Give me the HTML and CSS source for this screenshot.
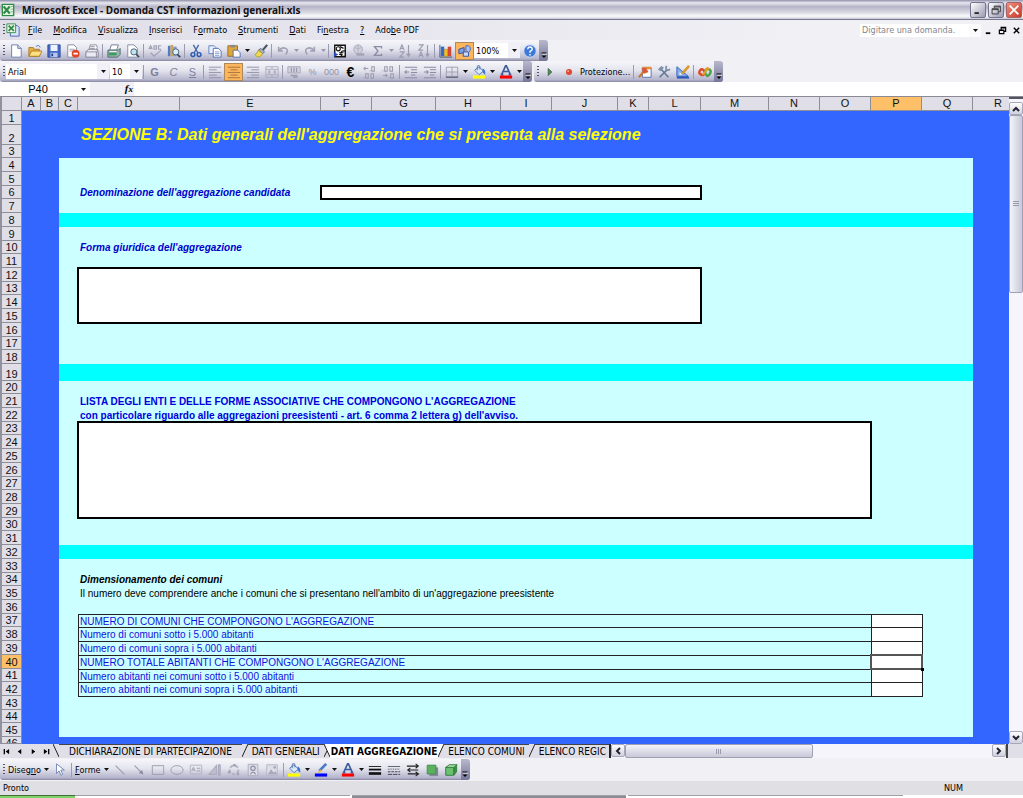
FILE: index.html
```html
<!DOCTYPE html>
<html lang="it">
<head>
<meta charset="utf-8">
<title>Microsoft Excel - Domanda CST informazioni generali.xls</title>
<link rel="stylesheet" href="styles.css">
</head>
<body>
<svg class="defs" aria-hidden="true">
  <symbol id="caret" viewBox="0 0 5 3"><path d="M0 0h5L2.500 3z" fill="#111"/></symbol>
  <symbol id="caret-off" viewBox="0 0 5 3"><path d="M0 0h5L2.500 3z" fill="#99a"/></symbol>
  <symbol id="more" viewBox="0 0 8 18"><path d="M2 12h5" stroke="#fff"/><path d="M1.500 11h5" stroke="#000"/><path d="M1.500 13.500h5L4 16z" fill="#000"/></symbol>
  <symbol id="bucket" viewBox="0 0 16 16"><path d="M3 6l5-4 5 5-5 4z" fill="#dce8f8" stroke="#4870a8"/><path d="M6 6V2q0-1.500 1.500-1.500T9 2v3" fill="none" stroke="#4870a8"/><path d="M12 4q4 1 3 7-3-2-3-4z" fill="#3a78d0"/><path d="M1 12h14v3.500H1z" fill="#ff0"/></symbol>
  <symbol id="font-color" viewBox="0 0 16 16"><path d="M3 11L7.500 1h1L13 11M5 7.500h6M2 11h3M11 11h3" fill="none" stroke="#3a5a9c" stroke-width="1.800"/><path d="M1 12h14v3.500H1z" fill="#f00"/></symbol>
</svg>

<header class="titlebar">
  <svg class="icon" viewBox="0 0 16 16"><path d="M1.500 1.500h13v13h-13z" fill="#e4f4e4" stroke="#2f8a45" stroke-width="1.500"/><path d="M11 4h3M11 7h3M11 10h3" stroke="#7ab888"/><path d="M3 4l7 8M10 4l-7 8" stroke="#2f8a45" stroke-width="2.400"/></svg>
  <h1 class="title">Microsoft Excel - Domanda CST informazioni generali.xls</h1>
  <button class="winbtn" aria-label="Riduci"><svg viewBox="0 0 16 16"><path d="M4 11.500h5" stroke="#222" stroke-width="2"/></svg></button>
  <button class="winbtn" aria-label="Ripristina"><svg viewBox="0 0 16 16"><path d="M6 6V3.500h7V10h-2M3.500 6.500h7v6h-7zM3.500 7.500h7M6 4.500h7" fill="none" stroke="#333"/></svg></button>
  <button class="winbtn winbtn-close" aria-label="Chiudi"><svg viewBox="0 0 16 16"><path d="M3 3l10 10M13 3L3 13" stroke="#fff" stroke-width="2"/></svg></button>
</header>

<nav class="menubar">
  <span class="grip"></span>
  <svg class="icon" viewBox="0 0 16 16"><path d="M5 3h8l2 2v10H5z" fill="#dce6fa" stroke="#3a5aa8"/><path d="M1 1h10v10H1z" fill="#e8f6e8" stroke="#2f8a45"/><path d="M3 3l6 6M9 3L3 9" stroke="#2f8a45" stroke-width="2"/></svg>
  <div class="menus">
    <button><u>F</u>ile</button><button><u>M</u>odifica</button><button><u>V</u>isualizza</button><button><u>I</u>nserisci</button><button>F<u>o</u>rmato</button><button><u>S</u>trumenti</button><button><u>D</u>ati</button><button>Fi<u>n</u>estra</button><button><u>?</u></button><button>Ado<u>b</u>e PDF</button>
  </div>
  <input class="ask" type="text" placeholder="Digitare una domanda." aria-label="Domanda">
  <button class="drop ask-drop" aria-label="Elenco domande"><svg><use href="#caret"/></svg></button>
  <button class="docbtn" aria-label="Riduci documento"><svg viewBox="0 0 10 10"><path d="M2 8h5" stroke="#000" stroke-width="2"/></svg></button>
  <button class="docbtn" aria-label="Ripristina documento"><svg viewBox="0 0 10 10"><path d="M3.500 4V1.500h5V6H7M1.500 4.500h5v4h-5zM1.500 5h5M3.500 2h5" fill="none" stroke="#000" stroke-width="1.300"/></svg></button>
  <button class="docbtn" aria-label="Chiudi documento"><svg viewBox="0 0 10 10"><path d="M2 2l6 6M8 2L2 8" stroke="#000" stroke-width="1.600"/></svg></button>
</nav>

<div class="barrow">
  <div class="toolbar" role="toolbar" aria-label="Standard">
    <span class="grip"></span>
    <button class="tool" aria-label="Nuovo"><svg viewBox="0 0 16 16"><path d="M3 1h7l4 4v10H3z" fill="#fff" stroke="#6478a8"/><path d="M10 1v4h4" fill="#cdd8ee" stroke="#6478a8"/></svg></button>
    <button class="tool" aria-label="Apri"><svg viewBox="0 0 16 16"><path d="M1 14V4h5l1 2h6v8z" fill="#e8b040" stroke="#a87820"/><path d="M1 14l3-6h12l-3 6z" fill="#ffe080" stroke="#a87820"/><path d="M9 3q3-3 5 1" fill="none" stroke="#456ab0"/></svg></button>
    <button class="tool" aria-label="Salva"><svg viewBox="0 0 16 16"><path d="M1 1h14v14H1z" fill="#4668c8" stroke="#284898"/><path d="M4 1h8v7H4z" fill="#eef4ff"/><path d="M4 10h8v5H4z" fill="#b8c8e8"/><path d="M5 11h2v3H5z" fill="#223a88"/></svg></button>
    <button class="tool" aria-label="Autorizzazioni"><svg viewBox="0 0 16 16"><path d="M2 1h7l3 3v11H2z" fill="#fff" stroke="#789"/><path d="M4 6h6M4 8h5" stroke="#99a"/><circle cx="11" cy="11" r="4.500" fill="#e04828"/><path d="M8.500 11h5" stroke="#fff" stroke-width="2"/></svg></button>
    <button class="tool" aria-label="Posta"><svg viewBox="0 0 16 16"><path d="M6 1h7l1 3-2 5H4z" fill="#fff" stroke="#889"/><path d="M1 9l3-3h10l1 3v6H1z" fill="#e8eaf4" stroke="#778"/><path d="M1 9h12v6M13 9l2-2M6 3h5M6 5h5" fill="none" stroke="#889"/></svg></button>
    <span class="sep"></span>
    <button class="tool" aria-label="Stampa"><svg viewBox="0 0 16 16"><path d="M5 1h8l-2 6H3z" fill="#fff" stroke="#678"/><path d="M1 7h12l2-2v7l-3 3H1z" fill="#9cb4b0" stroke="#466"/><path d="M2 10h9v3H2z" fill="#3c9c5c"/><path d="M3 8.500h8" stroke="#fff"/></svg></button>
    <button class="tool" aria-label="Anteprima"><svg viewBox="0 0 16 16"><path d="M2 1h7l4 4v10H2z" fill="#fff" stroke="#789"/><circle cx="9" cy="9" r="3.500" fill="#bfe4f4" stroke="#456"/><path d="M11.500 11.500L15 15" stroke="#456" stroke-width="2"/></svg></button>
    <span class="sep"></span>
    <button class="tool" aria-label="Controllo ortografia"><svg viewBox="0 0 16 16"><path d="M1 6l2-4 2 4M2 5h2M7 2v4h2.500V2zM15 2h-3v4h3M3 10l4 4 8-7" fill="none" stroke="#a0a0b4" stroke-width="1.400"/></svg></button>
    <button class="tool" aria-label="Ricerche"><svg viewBox="0 0 16 16"><path d="M1 2h3v12H1z" fill="#5878c0"/><path d="M4 1h3v13H4z" fill="#c8a860"/><path d="M7 3h4v11H7z" fill="#7c9cd4"/><circle cx="10" cy="9" r="3.500" fill="#d8f0fc" stroke="#456"/><path d="M12 12l3 3" stroke="#345" stroke-width="2"/></svg></button>
    <span class="sep"></span>
    <button class="tool" aria-label="Taglia"><svg viewBox="0 0 16 16"><path d="M5 1l5 9M11 1L6 10" stroke="#456ca8" stroke-width="1.600"/><circle cx="4.500" cy="12" r="2.200" fill="none" stroke="#2858b0" stroke-width="1.600"/><circle cx="11.500" cy="12" r="2.200" fill="none" stroke="#2858b0" stroke-width="1.600"/></svg></button>
    <button class="tool" aria-label="Copia"><svg viewBox="0 0 16 16"><path d="M1 2h6l2 2v7H1z" fill="#e8f0ff" stroke="#5878b8"/><path d="M6 5h6l3 3v7H6z" fill="#fff" stroke="#4868b0"/><path d="M8 9h5M8 11h5M8 13h5" stroke="#7c98d0"/></svg></button>
    <button class="tool" aria-label="Incolla"><svg viewBox="0 0 16 16"><path d="M1 2h11v12H1z" fill="#e0a838" stroke="#906820"/><path d="M4 1h5v3H4z" fill="#889"/><path d="M7 7h5l3 3v5H7z" fill="#fff" stroke="#4868b0"/></svg></button>
    <button class="drop" aria-label="Opzioni incolla"><svg><use href="#caret"/></svg></button>
    <button class="tool" aria-label="Copia formato"><svg viewBox="0 0 16 16"><path d="M15 1l-5 6" stroke="#456" stroke-width="2.500"/><path d="M8 5l4 4-2 2-5-4z" fill="#a8b4c8" stroke="#567"/><path d="M5 7l5 4q-2 4-6 4l-3-3q3-1 4-5z" fill="#f0d850" stroke="#a89830"/></svg></button>
    <span class="sep"></span>
    <button class="tool" aria-label="Annulla"><svg viewBox="0 0 16 16"><path d="M3 3v5h5M3 8q4-5 8-3t0 7" fill="none" stroke="#a0a0b4" stroke-width="1.800"/></svg></button>
    <button class="drop" aria-label="Elenco annulla"><svg><use href="#caret-off"/></svg></button>
    <button class="tool" aria-label="Ripeti"><svg viewBox="0 0 16 16"><path d="M13 3v5H8M13 8q-4-5-8-3t0 7" fill="none" stroke="#a0a0b4" stroke-width="1.800"/></svg></button>
    <button class="drop" aria-label="Elenco ripeti"><svg><use href="#caret-off"/></svg></button>
    <span class="sep"></span>
    <button class="tool" aria-label="Euro"><svg viewBox="0 0 16 16"><path d="M2 1.500h12v13H2z" fill="#fff" stroke="#111" stroke-width="1.600"/><circle cx="6" cy="5.500" r="2.300" fill="none" stroke="#111" stroke-width="1.300"/><path d="M8 3l4 2M14 8q-5-1-5 3t5 3M7 10h5M7 12h4" fill="none" stroke="#111" stroke-width="1.300"/><path d="M1 9l5 3-5 3z" fill="#2848c0"/></svg></button>
    <button class="tool" aria-label="Collegamento"><svg viewBox="0 0 16 16"><circle cx="7" cy="6" r="5" fill="#d0d0dc" stroke="#a8a8b8"/><path d="M3 4q4 3 8 0M7 1v10" fill="none" stroke="#b0b0c0"/><path d="M5 12h4M9 12h5" stroke="#a4a4b6" stroke-width="3"/></svg></button>
    <button class="tool" aria-label="Somma automatica"><svg viewBox="0 0 16 16"><path d="M12 5V3H4l4 5-4 5h8v-2" fill="none" stroke="#8c8ca4" stroke-width="1.600"/></svg></button>
    <button class="drop" aria-label="Altre funzioni"><svg><use href="#caret-off"/></svg></button>
    <button class="tool" aria-label="Ordinamento crescente"><svg viewBox="0 0 16 16"><path d="M2 7l2.500-6L7 7M3 5h3M2 9h5l-5 6h5M12 1v13M10 11l2 3 2-3" fill="none" stroke="#9c9cb0" stroke-width="1.300"/></svg></button>
    <button class="tool" aria-label="Ordinamento decrescente"><svg viewBox="0 0 16 16"><path d="M2 1h5L2 7h5M2 15l2.500-6L7 15M3 13h3M12 1v13M10 11l2 3 2-3" fill="none" stroke="#9c9cb0" stroke-width="1.300"/></svg></button>
    <span class="sep"></span>
    <button class="tool" aria-label="Grafico"><svg viewBox="0 0 16 16"><path d="M1 1v14h14" fill="none" stroke="#456"/><path d="M2 3h4v11H2z" fill="#3868c8"/><path d="M6 6h4v8H6z" fill="#f0c020" stroke="#a07010" stroke-width=".5"/><path d="M10 3h4v11h-4z" fill="#d04838"/></svg></button>
    <button class="tool tool-on" aria-label="Disegno"><svg viewBox="0 0 16 16"><path d="M1 6l6-2v6l-6 1z" fill="#7ca0e8" stroke="#2848a0"/><path d="M6 9h6v5H6z" fill="#c8dcfa" stroke="#2848a0"/><path d="M9 2q6-1 5 5l-2 3-3-3z" fill="#a8c4f4" stroke="#3860b8"/></svg></button>
    <input class="combo zoom" type="text" value="100%" aria-label="Zoom">
    <button class="drop drop-box" aria-label="Elenco zoom"><svg><use href="#caret"/></svg></button>
    <button class="tool" aria-label="Guida"><svg viewBox="0 0 16 16"><circle cx="8" cy="8" r="7" fill="#3c78d8" stroke="#c0d4f4"/><path d="M5.500 6q0-2.500 2.500-2.500T10.500 6q0 1.500-2.500 2.500V10M8 11.500v1.500" fill="none" stroke="#fff" stroke-width="1.600"/></svg></button>
    <button class="more" aria-label="Opzioni barra"><svg><use href="#more"/></svg></button>
  </div>
</div>

<div class="barrow">
  <div class="toolbar" role="toolbar" aria-label="Formattazione">
    <span class="grip"></span>
    <input class="combo fontname" type="text" value="Arial" aria-label="Tipo di carattere">
    <button class="drop drop-box" aria-label="Elenco caratteri"><svg><use href="#caret"/></svg></button>
    <input class="combo fontsize" type="text" value="10" aria-label="Dimensione">
    <button class="drop drop-box" aria-label="Elenco dimensioni"><svg><use href="#caret"/></svg></button>
    <span class="sep"></span>
    <button class="tool letter"><b>G</b></button>
    <button class="tool letter"><i>C</i></button>
    <button class="tool letter"><u>S</u></button>
    <span class="sep"></span>
    <button class="tool" aria-label="Allinea a sinistra"><svg viewBox="0 0 16 16"><path d="M1 2.500h14M1 5.500h9M1 8.500h14M1 11.500h9M1 14.500h14" stroke="#8c8ca4"/></svg></button>
    <button class="tool tool-on" aria-label="Centra"><svg viewBox="0 0 16 16"><path d="M1 2.500h14M4 5.500h8M1 8.500h14M4 11.500h8M1 14.500h14" stroke="#98703c"/></svg></button>
    <button class="tool" aria-label="Allinea a destra"><svg viewBox="0 0 16 16"><path d="M1 2.500h14M6 5.500h9M1 8.500h14M6 11.500h9M1 14.500h14" stroke="#8c8ca4"/></svg></button>
    <button class="tool" aria-label="Unisci e centra"><svg viewBox="0 0 16 16"><path d="M1 2h14v12H1zM1 5h14M1 11h14M8 2v3M8 11v3M3 8h3M10 8h3M6.500 8l-2-2v4zM9.500 8l2-2v4z" fill="none" stroke="#a8a8ba"/></svg></button>
    <span class="sep"></span>
    <button class="tool" aria-label="Valuta"><svg viewBox="0 0 16 16"><path d="M1 2h14v7H1z" fill="#d4d4e0" stroke="#a0a0b4"/><path d="M5 3v5M8 3v5M11 3v5M4 12h8M7 14h5" stroke="#9c9cb0" stroke-width="1.500"/></svg></button>
    <button class="tool letter off">%</button>
    <button class="tool letter off">000</button>
    <button class="tool letter euro">€</button>
    <button class="tool" aria-label="Aumenta decimali"><svg viewBox="0 0 16 16"><path d="M1 4h5M3 2L1 4l2 2M8 6v1M10 2h3v5h-3zM1 14v1M3 10h3v5H3zM9 10h3v5H9z" fill="none" stroke="#9c9cb0" stroke-width="1.200"/></svg></button>
    <button class="tool" aria-label="Diminuisci decimali"><svg viewBox="0 0 16 16"><path d="M1 6v1M3 2h3v5H3zM9 2h3v5H9zM1 12h5M4 10l2 2-2 2M8 14v1M10 10h3v5h-3z" fill="none" stroke="#9c9cb0" stroke-width="1.200"/></svg></button>
    <span class="sep"></span>
    <button class="tool" aria-label="Riduci rientro"><svg viewBox="0 0 16 16"><path d="M1 2.500h14M8 5.500h7M8 8.500h7M8 11.500h5M1 14.500h14M6 8H1M3 6L1 8l2 2" fill="none" stroke="#8c8ca4" stroke-width="1.200"/></svg></button>
    <button class="tool" aria-label="Aumenta rientro"><svg viewBox="0 0 16 16"><path d="M1 2.500h14M8 5.500h7M8 8.500h7M8 11.500h5M1 14.500h14M1 8h5M4 6l2 2-2 2" fill="none" stroke="#8c8ca4" stroke-width="1.200"/></svg></button>
    <span class="sep"></span>
    <button class="tool" aria-label="Bordi"><svg viewBox="0 0 16 16"><path d="M1.500 2.500h13v11h-13zM8 2v11M1 8h14" fill="none" stroke="#9c9cb0"/><path d="M1 14h14" stroke="#667" stroke-width="1.500"/></svg></button>
    <button class="drop" aria-label="Elenco bordi"><svg><use href="#caret"/></svg></button>
    <button class="tool" aria-label="Colore riempimento"><svg><use href="#bucket"/></svg></button>
    <button class="drop" aria-label="Elenco riempimenti"><svg><use href="#caret"/></svg></button>
    <button class="tool" aria-label="Colore carattere"><svg><use href="#font-color"/></svg></button>
    <button class="drop" aria-label="Elenco colori"><svg><use href="#caret"/></svg></button>
    <button class="more" aria-label="Opzioni barra"><svg><use href="#more"/></svg></button>
  </div>
  <div class="toolbar" role="toolbar" aria-label="Visual Basic">
    <span class="grip"></span>
    <button class="tool" aria-label="Esegui macro"><svg viewBox="0 0 16 16"><path d="M6 4l4 4-4 4z" fill="#5c8c3c" stroke="#365"/></svg></button>
    <button class="tool" aria-label="Registra macro"><svg viewBox="0 0 16 16"><circle cx="8" cy="8" r="3.500" fill="#dc4830"/><circle cx="7" cy="7" r="1" fill="#f8b0a0"/></svg></button>
    <button class="textbtn">Protezione...</button>
    <span class="sep"></span>
    <button class="tool" aria-label="Visual Basic Editor"><svg viewBox="0 0 16 16"><path d="M5 3h10v11H5z" fill="#fff" stroke="#4868b0"/><path d="M5 2h10v3H5z" fill="#e09040"/><path d="M1 14l6-7" stroke="#c87828" stroke-width="2.500"/><path d="M4 4l5-1 3 5-5 2z" fill="#d85838"/></svg></button>
    <button class="tool" aria-label="Casella degli strumenti"><svg viewBox="0 0 16 16"><path d="M3 14L12 5M4 4l9 10" stroke="#667c98" stroke-width="2"/><path d="M1 5l4-4 3 2-4 4z" fill="#8090a8"/><path d="M11 1q-2 4 1 5l3-1" fill="none" stroke="#8090a8" stroke-width="2"/></svg></button>
    <button class="tool" aria-label="Modalità progettazione"><svg viewBox="0 0 16 16"><path d="M1 2v11h13z" fill="#88b0ec" stroke="#2858b8"/><path d="M4 8v3h3z" fill="#fff"/><path d="M15 1L7 10" stroke="#d89828" stroke-width="3"/><path d="M1 14.500h14" stroke="#2858b8" stroke-width="2"/></svg></button>
    <span class="sep"></span>
    <button class="tool" aria-label="Microsoft Script Editor"><svg viewBox="0 0 16 16"><path d="M8 8Q5 3 2.500 6t1 5T8 8" fill="none" stroke="#e04828" stroke-width="2.800"/><path d="M8 8q2-5 5-3t0 6-5-3" fill="none" stroke="#48a048" stroke-width="2.800"/><path d="M5 11q3-1 4-5t4-1" fill="none" stroke="#e8a020" stroke-width="2.200"/></svg></button>
    <button class="more" aria-label="Opzioni barra"><svg><use href="#more"/></svg></button>
  </div>
</div>

<div class="formulabar">
  <input class="namebox" type="text" value="P40" aria-label="Casella nome">
  <button class="namedrop" aria-label="Elenco nomi"><svg><use href="#caret"/></svg></button>
  <button class="fx" aria-label="Inserisci funzione"><i>f<small>x</small></i></button>
  <input class="formula" type="text" aria-label="Barra della formula">
</div>

<div class="workbook">
  <main class="sheet">
    <span class="col corner"></span><span class="col">A</span><span class="col">B</span><span class="col">C</span><span class="col">D</span><span class="col">E</span><span class="col">F</span><span class="col">G</span><span class="col">H</span><span class="col">I</span><span class="col">J</span><span class="col">K</span><span class="col">L</span><span class="col">M</span><span class="col">N</span><span class="col">O</span><span class="col current">P</span><span class="col">Q</span><span class="col last">R</span>
    <span class="row">1</span><span class="row">2</span><span class="row">3</span><span class="row">4</span><span class="row">5</span><span class="row">6</span><span class="row">7</span><span class="row">8</span><span class="row">9</span><span class="row">10</span>
    <span class="row">11</span><span class="row">12</span><span class="row">13</span><span class="row">14</span><span class="row">15</span><span class="row">16</span><span class="row">17</span><span class="row">18</span><span class="row">19</span><span class="row">20</span>
    <span class="row">21</span><span class="row">22</span><span class="row">23</span><span class="row">24</span><span class="row">25</span><span class="row">26</span><span class="row">27</span><span class="row">28</span><span class="row">29</span><span class="row">30</span>
    <span class="row">31</span><span class="row">32</span><span class="row">33</span><span class="row">34</span><span class="row">35</span><span class="row">36</span><span class="row">37</span><span class="row">38</span><span class="row">39</span><span class="row current">40</span>
    <span class="row">41</span><span class="row">42</span><span class="row">43</span><span class="row">44</span><span class="row">45</span><span class="row">46</span>

    <div class="panel"></div>
    <div class="band band-8"></div>
    <div class="band band-19"></div>
    <div class="band band-32"></div>

    <h2 class="section">SEZIONE B: Dati generali dell'aggregazione che si presenta alla selezione</h2>
    <label class="cell slanted r6" for="nome">Denominazione dell'aggregazione candidata</label>
    <input class="box box-name" id="nome" type="text">
    <label class="cell slanted r10" for="forma">Forma giuridica dell'aggregazione</label>
    <textarea class="box box-form" id="forma"></textarea>
    <label class="cell strong r21" for="lista">LISTA DEGLI ENTI E DELLE FORME ASSOCIATIVE CHE COMPONGONO L'AGGREGAZIONE</label>
    <label class="cell strong r22" for="lista">con particolare riguardo alle aggregazioni preesistenti - art. 6 comma 2 lettera g) dell'avviso.</label>
    <textarea class="box box-list" id="lista"></textarea>
    <h3 class="cell heading r34">Dimensionamento dei comuni</h3>
    <p class="cell r35">Il numero deve comprendere anche i comuni che si presentano nell'ambito di un'aggregazione preesistente</p>

    <table class="figures">
      <tbody>
        <tr><th scope="row"><label for="p37">NUMERO DI COMUNI CHE COMPONGONO L'AGGREGAZIONE</label></th><td><input id="p37" type="text"></td></tr>
        <tr><th scope="row"><label for="p38">Numero di comuni sotto i 5.000 abitanti</label></th><td><input id="p38" type="text"></td></tr>
        <tr><th scope="row"><label for="p39">Numero di comuni sopra i 5.000 abitanti</label></th><td><input id="p39" type="text"></td></tr>
        <tr><th scope="row"><label for="p40">NUMERO TOTALE ABITANTI CHE COMPONGONO L'AGGREGAZIONE</label></th><td class="active"><input id="p40" type="text"></td></tr>
        <tr><th scope="row"><label for="p41">Numero abitanti nei comuni sotto i 5.000 abitanti</label></th><td><input id="p41" type="text"></td></tr>
        <tr><th scope="row"><label for="p42">Numero abitanti nei comuni sopra i 5.000 abitanti</label></th><td><input id="p42" type="text"></td></tr>
      </tbody>
    </table>
  </main>
  <div class="vscroll">
    <button class="scrollbtn" aria-label="Su"><svg viewBox="0 0 10 10"><path d="M2 7l3-3 3 3" fill="none" stroke="#223" stroke-width="2"/></svg></button>
    <div class="vthumb"></div>
    <div class="vtrack"></div>
    <button class="scrollbtn" aria-label="Giù"><svg viewBox="0 0 10 10"><path d="M2 3l3 3 3-3" fill="none" stroke="#223" stroke-width="2"/></svg></button>
  </div>
</div>

<div class="tabrow">
  <div class="tabnav">
    <button aria-label="Primo foglio"><svg viewBox="0 0 8 8"><path d="M1.500 1v6" stroke="#000" stroke-width="1.500"/><path d="M7 1v6L3 4z"/></svg></button>
    <button aria-label="Foglio precedente"><svg viewBox="0 0 8 8"><path d="M6 1v6L2 4z"/></svg></button>
    <button aria-label="Foglio successivo"><svg viewBox="0 0 8 8"><path d="M2 1v6l4-3z"/></svg></button>
    <button aria-label="Ultimo foglio"><svg viewBox="0 0 8 8"><path d="M1 1v6l4-3z"/><path d="M6.500 1v6" stroke="#000" stroke-width="1.500"/></svg></button>
  </div>
  <div class="tabs">
    <svg class="slant" viewBox="0 0 6 14"><path d="M0 0l6 13" stroke="#222"/></svg>
    <button class="tab tab-first">DICHIARAZIONE DI PARTECIPAZIONE</button>
    <svg class="slant" viewBox="0 0 6 14"><path d="M0 13L6 0" stroke="#222"/></svg>
    <button class="tab">DATI GENERALI</button>
    <svg class="slant" viewBox="0 0 6 14"><path d="M1 0h5v14z" fill="#fff"/><path d="M0 0l6 13M0 13l3-6" stroke="#222"/></svg>
    <button class="tab tab-on">DATI AGGREGAZIONE</button>
    <svg class="slant" viewBox="0 0 6 14"><path d="M0 0h6L0 14z" fill="#fff"/><path d="M0 13L6 0" stroke="#222"/></svg>
    <button class="tab">ELENCO COMUNI</button>
    <svg class="slant" viewBox="0 0 6 14"><path d="M0 13L6 0" stroke="#222"/></svg>
    <button class="tab tab-cut">ELENCO REGIC</button>
  </div>
  <div class="hscroll">
    <button class="scrollbtn" aria-label="Sinistra"><svg viewBox="0 0 10 10"><path d="M7 2L4 5l3 3" fill="none" stroke="#223" stroke-width="2"/></svg></button>
    <div class="hthumb"></div>
    <div class="htrack"></div>
    <button class="scrollbtn" aria-label="Destra"><svg viewBox="0 0 10 10"><path d="M3 2l3 3-3 3" fill="none" stroke="#223" stroke-width="2"/></svg></button>
  </div>
  <span class="sizer"></span>
</div>

<div class="barrow barrow-draw">
  <div class="toolbar" role="toolbar" aria-label="Disegno">
    <span class="grip"></span>
    <button class="textbtn">Diseg<u>n</u>o<svg><use href="#caret"/></svg></button>
    <button class="tool" aria-label="Selezione oggetti"><svg viewBox="0 0 16 16"><path d="M4 1v11l3-3 2 5 2-1-2-5h4z" fill="#fff" stroke="#6880b0"/></svg></button>
    <span class="sep"></span>
    <button class="textbtn"><u>F</u>orme<svg><use href="#caret"/></svg></button>
    <button class="tool" aria-label="Linea"><svg viewBox="0 0 16 16"><path d="M3 3l10 10" stroke="#9898ac" stroke-width="1.200"/></svg></button>
    <button class="tool" aria-label="Freccia"><svg viewBox="0 0 16 16"><path d="M3 3l8 8" stroke="#9898ac" stroke-width="1.200"/><path d="M13 13l-5-1.500L11.500 8z" fill="#8888a0"/></svg></button>
    <button class="tool" aria-label="Rettangolo"><svg viewBox="0 0 16 16"><path d="M1.500 3h13v10h-13z" fill="none" stroke="#9898ac"/></svg></button>
    <button class="tool" aria-label="Ovale"><svg viewBox="0 0 16 16"><ellipse cx="8" cy="8" rx="7" ry="5" fill="none" stroke="#9898ac"/></svg></button>
    <button class="tool" aria-label="Casella di testo"><svg viewBox="0 0 16 16"><path d="M1.500 2.500h13v10h-13z" fill="none" stroke="#b0b0c0"/><path d="M3 9l2-4 2 4M4 8h2M9 6h4M9 9h4" fill="none" stroke="#9898ac"/></svg></button>
    <button class="tool" aria-label="WordArt"><svg viewBox="0 0 16 16"><path d="M1 13l9-11v11zM12 2h2v12h-2z" fill="#bcbccc" stroke="#a4a4b8"/></svg></button>
    <button class="tool" aria-label="Diagramma"><svg viewBox="0 0 16 16"><circle cx="8" cy="8" r="5" fill="none" stroke="#b0b0c0" stroke-width="2" stroke-dasharray="4 2"/><path d="M7 1h3v3H7zM1 9h3v3H1zM11 11h3v3h-3z" fill="#a4a4b8"/></svg></button>
    <button class="tool" aria-label="ClipArt"><svg viewBox="0 0 16 16"><path d="M2.500 1.500h11v13h-11z" fill="#dedee8" stroke="#a8a8bc"/><circle cx="8" cy="6" r="2.500" fill="none" stroke="#9494aa" stroke-width="1.500"/><path d="M5 13q3-5 6 0" fill="none" stroke="#9494aa" stroke-width="1.500"/></svg></button>
    <button class="tool" aria-label="Immagine"><svg viewBox="0 0 16 16"><path d="M2 2h12v12H2z" fill="#dedee8" stroke="#b0b0c0"/><path d="M3 13l4-6 3 4 2-2 2 4z" fill="#a8a8bc"/><circle cx="11" cy="5" r="1.500" fill="#a8a8bc"/></svg></button>
    <span class="sep"></span>
    <button class="tool" aria-label="Colore riempimento"><svg><use href="#bucket"/></svg></button>
    <button class="drop" aria-label="Elenco riempimenti"><svg><use href="#caret"/></svg></button>
    <button class="tool" aria-label="Colore linea"><svg viewBox="0 0 16 16"><path d="M14 1L6 9" stroke="#4878c8" stroke-width="3"/><path d="M7 7l2 2-5 3z" fill="#e8b840"/><path d="M1 12h14v3.500H1z" fill="#00f"/></svg></button>
    <button class="drop" aria-label="Elenco colori linea"><svg><use href="#caret"/></svg></button>
    <button class="tool" aria-label="Colore carattere"><svg><use href="#font-color"/></svg></button>
    <button class="drop" aria-label="Elenco colori carattere"><svg><use href="#caret"/></svg></button>
    <button class="tool" aria-label="Stile linea"><svg viewBox="0 0 16 16"><path d="M1 4h14" stroke="#111"/><path d="M1 7.500h14" stroke="#111" stroke-width="2"/><path d="M1 12h14" stroke="#111" stroke-width="3"/></svg></button>
    <button class="tool" aria-label="Stile tratteggio"><svg viewBox="0 0 16 16"><path d="M1 4h14" stroke="#556"/><path d="M1 7h14" stroke="#334" stroke-dasharray="1 1"/><path d="M1 10h14" stroke="#334" stroke-dasharray="3 1"/><path d="M1 13h14" stroke="#334" stroke-dasharray="5 1"/></svg></button>
    <button class="tool" aria-label="Stile freccia"><svg viewBox="0 0 16 16"><path d="M1 3.500h13M2 8h12M2 12.500h13M11 1l3 2.500L11 6M5 5.500L2 8l3 2.500M11 10l3 2.500-3 2.500" fill="none" stroke="#222" stroke-width="1.300"/></svg></button>
    <button class="tool" aria-label="Stile ombreggiatura"><svg viewBox="0 0 16 16"><path d="M5 5h10v10H5z" fill="#889"/><path d="M2.500 2.500h10v10h-10z" fill="#5cb060" stroke="#3c8c48"/></svg></button>
    <button class="tool" aria-label="Stile 3D"><svg viewBox="0 0 16 16"><path d="M2 5l4-3h9v8l-3 4H2z" fill="#3c8c48"/><path d="M2 5h9v9H2z" fill="#6cc070" stroke="#2f7c3c"/><path d="M2 5l4-3h9l-4 3z" fill="#a8e0a8" stroke="#2f7c3c"/></svg></button>
    <button class="more" aria-label="Opzioni barra"><svg><use href="#more"/></svg></button>
  </div>
</div>

<footer class="status"><span>Pronto</span><span class="num">NUM</span></footer>
<div class="taskbar"><span class="start"></span><span class="task"></span><span class="task task-on"></span><span class="task"></span><span class="tray"></span></div>
</body>
</html>
```
FILE: styles.css
```css
* { box-sizing: border-box; }

body {
  margin: 0;
  height: 100vh;
  display: flex;
  flex-direction: column;
  overflow: hidden;
  background: #f1f0f5;
  color: #000;
  font: 9px/12px "DejaVu Sans Condensed", "Noto Sans", sans-serif;
}

button, input, textarea {
  margin: 0;
  padding: 0;
  border: 0;
  border-radius: 0;
  background: none;
  color: inherit;
  font: inherit;
  outline: 0;
}
button { display: flex; align-items: center; justify-content: center; flex: none; white-space: nowrap; }
h1, h2, h3, p { margin: 0; }
.defs { position: absolute; width: 0; height: 0; }
.icon { width: 14px; height: 14px; flex: none; }

/* Title bar */
.titlebar {
  flex: none;
  height: 20px;
  display: flex;
  align-items: center;
  padding: 0 1px;
  gap: 2px;
  border-bottom: 1px solid #77778f;
  background: linear-gradient(#8f8fa8, #e8e8f0 15%, #b4b4c8 35%, #d8d8e2 65%, #fbfbfd 85%, #c8c8d6);
}
.title { flex: 1; padding-left: 5px; font: bold 10px/18px "Noto Sans", sans-serif; color: #111; }
.winbtn { width: 16px; height: 16px; border: 1px solid #74748e; border-radius: 2px; background: linear-gradient(135deg, #fff, #9a9ab4); }
.winbtn svg { width: 14px; height: 14px; }
.winbtn-close { background: linear-gradient(135deg, #f09080, #c83828); border-color: #a86464; }

/* Menu bar */
.menubar { flex: none; height: 20px; display: flex; align-items: center; padding-left: 3px; background: linear-gradient(90deg, #dfdee8, #f1f0f5 80%); }
.menus { flex: 1; display: flex; gap: 11px; padding-left: 8px; }
.ask { width: 109px; height: 13px; padding-left: 2px; background: #fff; }
.ask::placeholder { color: #85858c; opacity: 1; }
.ask-drop { background: #fbfbfd; }
.docbtn { width: 14px; height: 14px; }
.docbtn svg { width: 9px; height: 9px; }

.grip { flex: none; width: 2px; height: 12px; margin-right: 1px; background: repeating-linear-gradient(#55556c 0 1px, transparent 1px 3px); }

/* Toolbars */
.barrow { flex: none; height: 21px; display: flex; gap: 2px; }
.toolbar {
  display: flex;
  align-items: center;
  height: 21px;
  padding-left: 3px;
  border-radius: 3px;
  background: linear-gradient(#f6f6fa, #e4e4ee 45%, #b4b4cc 90%, #85859f);
}
.tool { width: 19px; height: 18px; }
.tool svg { width: 14px; height: 14px; }
.tool-on { border: 1px solid #b08858; background: #fdb65c; }
.drop { width: 8px; height: 14px; }
.drop svg, .textbtn svg, .namedrop svg { width: 5px; height: 3px; }
.ask-drop { width: 12px; height: 13px; }
.drop-box { width: 12px; background: #f0f0f6; }
.sep { flex: none; width: 1px; height: 14px; margin: 0 1px; background: #9a9ab2; }
.more { width: 9px; height: 21px; border-radius: 0 3px 3px 0; background: linear-gradient(#b8b8cc, #76769a); }
.more svg { width: 8px; height: 18px; }
.combo { height: 15px; padding-left: 2px; background: #fff; }
.zoom { width: 34px; }
.fontname { width: 91px; }
.fontsize { width: 20px; margin-left: 1px; }
.letter { font: 11px/14px "Liberation Sans", sans-serif; color: #8080a0; }
.off { font-size: 9px; color: #9090a6; }
.euro { font-weight: bold; font-size: 14px; color: #000; }
.textbtn { padding: 0 2px; }
.textbtn svg { margin-left: 3px; }

.formulabar { flex: none; height: 15px; display: flex; align-items: center; background: #fff; border-bottom: 1px solid #8a8a96; }
.namebox { width: 76px; text-align: center; font: 11px/13px "Liberation Sans", sans-serif; }
.namedrop { width: 14px; height: 14px; }
.fx { width: 44px; height: 14px; justify-content: flex-end; padding-right: 1px; background: #efeff5; font: bold 11px/13px "Liberation Serif", serif; }
.fx small { font-size: 9px; }
.formula { flex: 1; }

/* Worksheet */
.workbook { flex: 1; min-height: 0; display: flex; }
.sheet {
  flex: 1;
  min-width: 0;
  display: grid;
  grid-template-columns:
    20px minmax(0, 19fr) minmax(0, 18fr) minmax(0, 19fr) minmax(0, 102fr) minmax(0, 141fr)
    minmax(0, 51fr) minmax(0, 64fr) minmax(0, 65fr) minmax(0, 51fr) minmax(0, 66fr)
    minmax(0, 31fr) minmax(0, 52fr) minmax(0, 68fr) minmax(0, 51fr) minmax(0, 51fr)
    minmax(0, 51fr) minmax(0, 51fr) minmax(0, 36fr);
  grid-template-rows:
    14px minmax(0, 20fr) minmax(0, 29fr) repeat(16, minmax(0, 20fr))
    minmax(0, 24fr) repeat(26, minmax(0, 20fr)) minmax(0, 10fr);
  overflow: hidden;
  border-left: 2px solid #92929e;
  background: #36f;
  font: 10px/13px "Liberation Sans", sans-serif;
}
.col, .row {
  display: flex;
  justify-content: center;
  align-items: center;
  overflow: hidden;
  background: #e0dfe8;
  border: solid #8e8e98;
  border-width: 0 1px 1px 0;
  font-size: 11px;
  color: #111;
}
.row { grid-column: 1; align-items: flex-end; line-height: 12px; }
.row:last-of-type { align-items: flex-start; }
.col.current, .row.current { background: #fdc068; }
.col.last { padding-left: 14px; border-right: 0; }

.panel { grid-area: 5 / 4 / 47 / 19; background: #cff; }
.band { grid-column: 4 / 19; background: #0ff; }
.band-8 { grid-row: 9; }
.band-19 { grid-row: 20; }
.band-32 { grid-row: 33; }

.section { grid-area: 3 / 5 / 4 / 20; align-self: center; padding-left: 3px; font: italic bold 16px/18px "Liberation Sans", sans-serif; color: #ff0; white-space: nowrap; }
.cell { grid-column: 5 / 19; align-self: end; padding-left: 2px; font: inherit; white-space: nowrap; }
.slanted { font-weight: bold; font-style: italic; color: #00c; }
.strong { font-weight: bold; color: #00d; }
.heading { font-weight: bold; font-style: italic; }
.r6 { grid-row: 7; }
.r10 { grid-row: 11; }
.r21 { grid-row: 22; }
.r22 { grid-row: 23; }
.r34 { grid-row: 35; }
.r35 { grid-row: 36; }

.box { min-width: 0; min-height: 0; margin: -1px; border: 2px solid #000; background: #fff; resize: none; }
.box-name { grid-area: 7 / 7 / 8 / 14; }
.box-form { grid-area: 13 / 5 / 17 / 14; }
.box-list { grid-area: 24 / 5 / 31 / 17; }

.figures {
  grid-area: 38 / 5 / 44 / 18;
  display: grid;
  grid-template: subgrid / subgrid;
  margin: 0 -1px -1px 0;
  border: solid #222;
  border-width: 0 1px 1px 0;
}
.figures tbody, .figures tr { display: contents; }
.figures th, .figures td { padding: 0; min-height: 0; border: solid #222; border-width: 1px 0 0 1px; }
.figures th { grid-column: 1 / 13; padding-left: 1px; text-align: left; font: inherit; color: #11d; white-space: nowrap; }
.figures td { grid-column: 13; position: relative; display: flex; background: #fff; }
.figures input { width: 100%; min-width: 0; height: 100%; }
.figures .active { outline: 2px solid #555; outline-offset: -1px; z-index: 1; }
.active::after { content: ""; position: absolute; right: -2px; bottom: -2px; width: 3px; height: 3px; background: #000; }

/* Scroll bars */
.scrollbtn { width: 14px; height: 13px; border: 1px solid #a8a8ba; border-radius: 2px; background: linear-gradient(#fff, #d0d0de); }
.scrollbtn svg { width: 10px; height: 10px; }
.vscroll { flex: none; width: 14px; display: flex; flex-direction: column; padding-top: 3px; border-top: 2px solid #55555f; background: #f6f5fb; }
.vthumb, .hthumb { display: flex; align-items: center; justify-content: center; border: 1px solid #a0a0b4; border-radius: 2px; }
.vthumb { flex: 177; background: linear-gradient(90deg, #f4f4fa, #c8c8d8); }
.vthumb::after { content: ""; width: 6px; height: 6px; background: repeating-linear-gradient(#9a9aae 0 1px, transparent 1px 2px); }
.vtrack { flex: 439; }

/* Sheet tabs */
.tabrow { flex: none; height: 14px; display: flex; background: #e0dfe8; }
.tabnav { display: flex; width: 53px; }
.tabnav button { flex: 1; }
.tabnav svg { width: 7px; height: 7px; }
.tabs { display: flex; width: 558px; overflow: hidden; border-right: 2px solid #222; font-size: 10px; }
.slant { flex: none; width: 6px; height: 14px; fill: none; }
.tab { padding: 0 4px; border-top: 1px solid #444; }
.tab-first { padding: 0 10px; }
.tab-on { padding: 0 1px; border-top-color: #fff; background: #fff; font-weight: bold; }
.tab-cut { flex: 1; justify-content: flex-start; padding-right: 0; }
.hscroll { flex: 1; display: flex; background: #f6f5fb; }
.hthumb { flex: 187; background: linear-gradient(#f4f4fa, #c8c8d8); }
.hthumb::after { content: ""; width: 6px; height: 5px; background: repeating-linear-gradient(90deg, #9a9aae 0 1px, transparent 1px 2px); }
.htrack { flex: 179; }
.sizer { width: 17px; border-left: 2px solid #444; background: #e0dfe8; }

.barrow-draw { height: 23px; align-items: center; }

/* Status and task bars */
.status { flex: none; height: 14px; display: flex; align-items: center; justify-content: space-between; padding: 0 60px 0 3px; background: #e0dfe4; }
.taskbar { flex: none; height: 3px; display: flex; background: #fff; }
.start { width: 75px; background: #7cd468; border-top: 1px solid #486c40; }
.task { flex: 1; border-top: 1px solid #a0a0a8; margin-right: 2px; }
.task-on { background: #8c8c96; }
.tray { width: 118px; }
```
